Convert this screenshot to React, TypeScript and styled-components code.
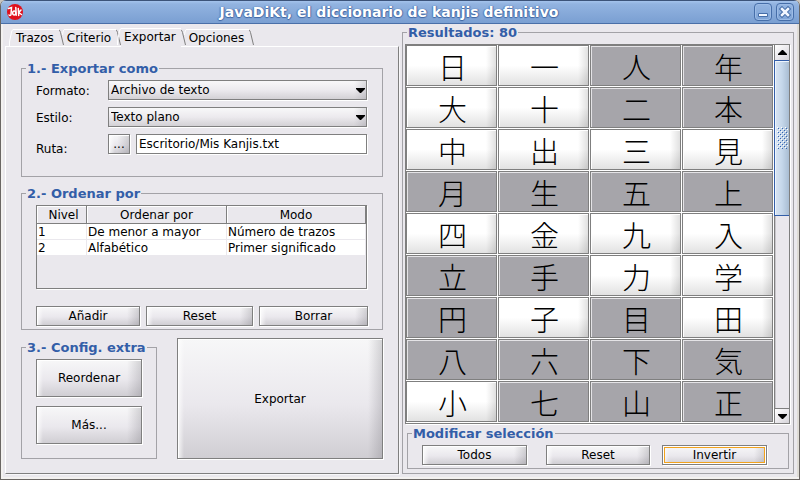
import React, { useState } from 'react';
import styled, { createGlobalStyle, css } from 'styled-components';

const face = '#eae8ed';
const edge = '#7f7f7f';
const etched = '#a3a2a7';
const accent = '#335ea8';

const GlobalStyle = createGlobalStyle`
  * { box-sizing: border-box; }
  body {
    margin: 0;
    background: #c9c5bf;
    font: 12px/14px "DejaVu Sans", sans-serif;
    color: #000;
  }
  button, input, select { font: inherit; color: inherit; margin: 0; outline: none; }
`;

const Frame = styled.div`
  min-height: 100vh;
  display: flex;
  flex-direction: column;
  background: ${face};
  border: 1px solid #6a6663;
  border-top: 0;
  border-radius: 6px 6px 0 0;
  overflow: hidden;
  box-shadow: inset 2px -2px 0 #f3f1f0, inset -2px 0 0 #dfdcd6;
`;

const TitleBar = styled.header`
  height: 24px;
  display: flex;
  align-items: center;
  gap: 4px;
  padding: 0 5px 0 5px;
  border-top: 1px solid #3c5379;
  border-bottom: 1px solid #4a6fa8;
  background: linear-gradient(#a4c3ec 0, #92b3e0 3px, #7a9fd2 100%);
`;

const Title = styled.h1`
  flex: 1;
  margin: 0;
  text-align: center;
  font-size: 14px;
  line-height: 18px;
  font-weight: bold;
  color: #fff;
  text-shadow: 0 1px 1px #3f66a3, 1px 0 1px #4a70ac, -1px 0 1px #5a80ba;
`;

const WindowButton = styled.button`
  width: 18px;
  height: 18px;
  padding: 0;
  display: grid;
  place-items: center;
  border: 1px solid #466ea9;
  border-radius: 4px;
  background: linear-gradient(#93b4e1, #7fa4d6);
  box-shadow: inset 0 0 0 1px #9dbce6;
`;

const Body = styled.main`
  flex: 1;
  display: grid;
  grid-template-columns: 394fr 392fr;
  gap: 3px;
  padding: 1px 5px 5px 4px;
`;

const Left = styled.section`
  display: flex;
  flex-direction: column;
  min-width: 0;
  padding-top: 3px;
`;

const TabStrip = styled.div`
  display: flex;
  padding-left: 4px;
  height: 18px;
`;

const TabButton = styled.button<{ $on: boolean }>`
  display: flex;
  height: ${p => (p.$on ? 19 : 18)}px;
  padding: 0;
  border: 0;
  background: none;
  z-index: ${p => (p.$on ? 1 : 0)};
  & + & { margin-left: -4px; }
  svg { display: block; flex: none; }
`;

const TabText = styled.span<{ $on: boolean }>`
  margin-top: ${p => (p.$on ? 0 : 1)}px;
  height: ${p => (p.$on ? 19 : 17)}px;
  padding: 1px 5px 0 3px;
  border-top: 1px solid #fff;
  background: ${face};
  line-height: 15px;
`;

const TabPanel = styled.div`
  flex: 1;
  display: flex;
  flex-direction: column;
  gap: 9px;
  padding: 14px 15px;
  border: 1px solid;
  border-color: #fff ${edge} ${edge} #fff;
  box-shadow: 1px 1px 0 #f8f7f9;
`;

const Group = styled.fieldset`
  min-width: 0;
  margin: 0;
  padding: 0;
  border: 1px solid ${etched};
`;

const GroupBody = styled.div<{ $pad: string }>`
  padding: ${p => p.$pad};
`;

const Legend = styled.legend`
  margin-left: 4px;
  padding: 0 1px;
  height: 15px;
  font-size: 13px;
  line-height: 15px;
  font-weight: bold;
  color: ${accent};
  white-space: nowrap;
`;

const FormGrid = styled.div`
  display: grid;
  grid-template-columns: 72px 1fr;
  grid-auto-rows: 20px;
  row-gap: 7px;
`;

const Label = styled.label<{ $low?: boolean }>`
  padding-top: ${p => (p.$low ? 8 : 4)}px;
`;

const SelectBox = styled.div`
  display: grid;
  align-items: center;
  > * { grid-area: 1 / 1; }
  svg { justify-self: end; margin-right: 2px; pointer-events: none; }
`;

const Select = styled.select`
  appearance: none;
  width: 100%;
  height: 20px;
  padding: 0 18px 0 2px;
  border: 1px solid ${edge};
  border-radius: 0;
  background: linear-gradient(to left, rgba(80, 78, 90, 0.16), transparent 12px),
    linear-gradient(#f8f8f9, #eceaee 50%, #d3d1d5);
  box-shadow: 1px 1px 0 #fff;
`;

const PathRow = styled.div`
  display: flex;
  gap: 6px;
`;

const TextInput = styled.input`
  flex: 1;
  min-width: 0;
  height: 20px;
  padding: 0 2px;
  border: 1px solid ${edge};
  background: #fff;
  box-shadow: 1px 1px 0 #fff;
`;

const PushButton = styled.button<{ $h?: number; $w?: number; $focus?: boolean; $tall?: boolean }>`
  height: ${p => p.$h ?? 20}px;
  width: ${p => (p.$w ? `${p.$w}px` : 'auto')};
  min-width: 0;
  padding: 0;
  border: 1px solid ${edge};
  background: linear-gradient(to right, rgba(255, 255, 255, 0.8), transparent 6px),
    linear-gradient(to left, rgba(70, 68, 76, 0.2), transparent ${p => (p.$tall ? 14 : 12)}px),
    linear-gradient(#f7f7f8, #eae8ed 55%, #d0ced3);
  box-shadow: 1px 1px 0 #fff, inset 1px 1px 0 #fff;
  ${p =>
    p.$focus &&
    css`
      box-shadow: 1px 1px 0 #fff, inset 0 0 0 1px #fff, inset 0 0 0 2px #f2a21c;
    `}
`;

const TableBox = styled.div`
  height: 84px;
  margin-right: 1px;
  border: 1px solid ${edge};
  box-shadow: 1px 1px 0 #fff;
`;

const Levels = styled.table`
  width: 100%;
  table-layout: fixed;
  border-collapse: separate;
  border-spacing: 0;
  col:nth-child(1) { width: 50px; }
  col:nth-child(2) { width: 140px; }
  th {
    height: 18px;
    padding: 1px 0 0;
    font-weight: normal;
    border-right: 1px solid ${edge};
    border-bottom: 1px solid ${edge};
    box-shadow: inset 1px 1px 0 #fff;
  }
  th:first-child { padding-left: 4px; }
  td {
    height: 16px;
    padding: 0 1px;
    background: #fff;
    border-right: 1px solid ${face};
    border-bottom: 1px solid ${face};
    white-space: nowrap;
  }
`;

const ThreeButtons = styled.div`
  display: grid;
  grid-template-columns: 104fr 107fr 109fr;
  gap: 6px;
  margin-top: 17px;
`;

const ExtraRow = styled.div`
  display: flex;
  align-items: flex-end;
  gap: 20px;
  margin-top: -1px;
`;

const ExtraGroup = styled(Group)`
  width: 136px;
`;

const Stack = styled.div`
  display: flex;
  flex-direction: column;
  gap: 9px;
`;

const Grow = styled.div`
  flex: 1;
  display: grid;
`;

const Results = styled.div`
  display: grid;
  grid-template-columns: 1fr 15px;
  border: 1px solid ${edge};
  box-shadow: 1px 1px 0 #fff;
`;

const KanjiGrid = styled.div`
  display: grid;
  grid-template-columns: repeat(4, 1fr);
  grid-auto-rows: 41px;
  gap: 1px;
  padding: 0 1px 1px 0;
  background: #fff;
`;

const KanjiButton = styled.button<{ $sel: boolean }>`
  min-width: 0;
  padding: 0 0 0 2px;
  border: 1px solid ${edge};
  font: 300 29px/32px "Noto Sans CJK JP", sans-serif;
  background: ${p =>
    p.$sel
      ? '#a6a5aa'
      : `linear-gradient(to left, rgba(0, 0, 0, 0.12), transparent 10px),
         linear-gradient(#fff 50%, #e2e2e2)`};
  box-shadow: inset 1px 1px 0 ${p => (p.$sel ? '#e4e3e6' : '#fff')};
`;

const ScrollBar = styled.div`
  display: flex;
  flex-direction: column;
  background: ${face};
  border-left: 1px solid ${edge};
  box-shadow: inset 1px 0 0 #c8c6cb;
`;

const ScrollButton = styled.button`
  height: 15px;
  padding: 0;
  display: grid;
  place-items: center;
  border: 0;
  background: linear-gradient(135deg, #fff, #eceaee 50%, #d5d3d8);
`;

const DownButton = styled(ScrollButton)`
  border-top: 1px solid ${edge};
`;

const Thumb = styled.div`
  height: 156px;
  margin-left: -1px;
  display: grid;
  place-items: center;
  border: 1px solid ${accent};
  border-right: 0;
  background: linear-gradient(to right, #d9e5f3, #c5d7ea 50%, #a9bdd2);
  box-shadow: inset 1px 1px 0 #eef5fc;
`;

const Track = styled.div`
  flex: 1;
`;

const SelectionGroup = styled(Group)`
  margin: 2px 1px 0 2px;
`;

const SelectionButtons = styled.div`
  display: grid;
  grid-template-columns: 112fr 104fr 105fr;
  gap: 12px;
  > :first-child { margin-right: 7px; }
`;

const DownArrow = () => (
  <svg width="9" height="5" viewBox="0 0 9 5" aria-hidden="true">
    <path d="M0 0h9v1L5 5H4L0 1z" />
  </svg>
);

const UpArrow = () => (
  <svg width="9" height="5" viewBox="0 0 9 5" aria-hidden="true">
    <path d="M4 0h1l4 4v1H0V4z" />
  </svg>
);

const Logo = () => (
  <svg width="18" height="18" viewBox="0 0 18 18" role="img" aria-label="JavaDiKt">
    <circle cx="9" cy="9" r="8" fill="#e0101c" />
    <g fill="none" stroke="#fff" strokeWidth="1.5" strokeLinecap="round">
      <path d="M2.500 5.500L5.500 4.500 5 11.500Q4.500 13 3 12" />
      <ellipse cx="8.200" cy="10" rx="1.500" ry="2" />
      <path d="M9.800 4.500l.4 7.800M12.300 5.500l.4 7M15 7l-2.300 2.500 2.800 2" />
    </g>
  </svg>
);

const Grip = () => (
  <svg width="11" height="22" viewBox="0 0 11 22" aria-hidden="true">
    <defs>
      <pattern id="grip" width="4" height="4" patternUnits="userSpaceOnUse">
        <path d="M0 0h1v1H0zM2 2h1v1H2z" fill="#fff" />
        <path d="M1 1h1v1H1zM3 3h1v1H3z" fill="#3465b4" />
      </pattern>
    </defs>
    <rect width="11" height="22" fill="url(#grip)" />
  </svg>
);

function Tab({ label, on, first, onClick }: { label: string; on: boolean; first: boolean; onClick: () => void }) {
  const leftLine = on || first ? 'M0.5 18V14L2.5 4Q3 1.5 4.5 1.5' : 'M2.5 7L3 4Q3.5 1.5 4.5 1.5';
  const shift = on ? 'translate(0 -1)' : undefined;
  return (
    <TabButton type="button" role="tab" aria-selected={on} $on={on} onClick={onClick}>
      <svg width="4" height="18" viewBox="0 0 4 18" aria-hidden="true">
        <path d={leftLine} transform={shift} fill="none" stroke="#fff" />
      </svg>
      <TabText $on={on}>{label}</TabText>
      <svg width="5" height="18" viewBox="0 0 5 18" aria-hidden="true">
        <path d="M0 2q1 .3 1.500 2.500L4.500 17" fill="none" stroke={edge} />
      </svg>
    </TabButton>
  );
}

const tabs = ['Trazos', 'Criterio', 'Exportar', 'Opciones'];
const kanji = [...'日一人年大十二本中出三見月生五上四金九入立手力学円子目田八六下気小七山正'];
const picked = [...'人年二本月生五上立手円目八六下気七山正'];

export default function App() {
  const [tab, setTab] = useState('Exportar');
  const [selected, setSelected] = useState<string[]>(picked);
  const toggle = (k: string) =>
    setSelected(s => (s.includes(k) ? s.filter(x => x !== k) : [...s, k]));

  return (
    <>
      <GlobalStyle />
      <Frame>
        <TitleBar>
          <Logo />
          <Title>JavaDiKt, el diccionario de kanjis definitivo</Title>
          <WindowButton type="button" aria-label="Minimizar">
            <svg width="12" height="12" viewBox="0 0 12 12" aria-hidden="true">
              <path d="M1.500 7.500h9v3h-9z" fill="#f2f7ff" stroke="#466ea9" />
            </svg>
          </WindowButton>
          <WindowButton type="button" aria-label="Cerrar">
            <svg width="12" height="12" viewBox="0 0 12 12" aria-hidden="true">
              <path d="M3 3l6 6M9 3l-6 6" stroke="#466ea9" strokeWidth="4.500" strokeLinecap="square" />
              <path d="M3 3l6 6M9 3l-6 6" stroke="#f2f7ff" strokeWidth="2.500" strokeLinecap="square" />
            </svg>
          </WindowButton>
        </TitleBar>
        <Body>
          <Left>
            <TabStrip role="tablist">
              {tabs.map((t, i) => (
                <Tab key={t} label={t} first={i === 0} on={t === tab} onClick={() => setTab(t)} />
              ))}
            </TabStrip>
            <TabPanel role="tabpanel">
              <Group>
                <Legend>1.- Exportar como</Legend>
                <GroupBody $pad="4px 15px 22px 14px">
                  <FormGrid>
                    <Label htmlFor="formato">Formato:</Label>
                    <SelectBox>
                      <Select id="formato">
                        <option>Archivo de texto</option>
                      </Select>
                      <DownArrow />
                    </SelectBox>
                    <Label htmlFor="estilo">Estilo:</Label>
                    <SelectBox>
                      <Select id="estilo">
                        <option>Texto plano</option>
                      </Select>
                      <DownArrow />
                    </SelectBox>
                    <Label htmlFor="ruta" $low>Ruta:</Label>
                    <PathRow>
                      <PushButton type="button" $w={22}>...</PushButton>
                      <TextInput id="ruta" defaultValue="Escritorio/Mis Kanjis.txt" />
                    </PathRow>
                  </FormGrid>
                </GroupBody>
              </Group>
              <Group>
                <Legend>2.- Ordenar por</Legend>
                <GroupBody $pad="4px 14px 3px">
                  <TableBox>
                    <Levels>
                      <colgroup><col /><col /><col /></colgroup>
                      <thead>
                        <tr><th>Nivel</th><th>Ordenar por</th><th>Modo</th></tr>
                      </thead>
                      <tbody>
                        <tr><td>1</td><td>De menor a mayor</td><td>Número de trazos</td></tr>
                        <tr><td>2</td><td>Alfabético</td><td>Primer significado</td></tr>
                      </tbody>
                    </Levels>
                  </TableBox>
                  <ThreeButtons>
                    <PushButton type="button">Añadir</PushButton>
                    <PushButton type="button">Reset</PushButton>
                    <PushButton type="button">Borrar</PushButton>
                  </ThreeButtons>
                </GroupBody>
              </Group>
              <ExtraRow>
                <ExtraGroup>
                  <Legend>3.- Config. extra</Legend>
                  <GroupBody $pad="4px 14px 14px">
                    <Stack>
                      <PushButton type="button" $h={38} $tall>Reordenar</PushButton>
                      <PushButton type="button" $h={38} $tall>Más...</PushButton>
                    </Stack>
                  </GroupBody>
                </ExtraGroup>
                <Grow>
                  <PushButton type="button" $h={121} $tall>Exportar</PushButton>
                </Grow>
              </ExtraRow>
            </TabPanel>
          </Left>
          <Group>
            <Legend>Resultados: 80</Legend>
            <GroupBody $pad="4px 3px 4px 2px">
              <Results>
                <KanjiGrid>
                  {kanji.map(k => (
                    <KanjiButton
                      key={k}
                      type="button"
                      lang="ja"
                      aria-pressed={selected.includes(k)}
                      $sel={selected.includes(k)}
                      onClick={() => toggle(k)}
                    >
                      {k}
                    </KanjiButton>
                  ))}
                </KanjiGrid>
                <ScrollBar>
                  <ScrollButton type="button" aria-label="Subir"><UpArrow /></ScrollButton>
                  <Thumb><Grip /></Thumb>
                  <Track />
                  <DownButton type="button" aria-label="Bajar"><DownArrow /></DownButton>
                </ScrollBar>
              </Results>
              <SelectionGroup>
                <Legend>Modificar selección</Legend>
                <GroupBody $pad="4px 21px 3px 14px">
                  <SelectionButtons>
                    <PushButton type="button" onClick={() => setSelected(kanji)}>Todos</PushButton>
                    <PushButton type="button" onClick={() => setSelected([])}>Reset</PushButton>
                    <PushButton
                      type="button"
                      $focus
                      onClick={() => setSelected(kanji.filter(k => !selected.includes(k)))}
                    >
                      Invertir
                    </PushButton>
                  </SelectionButtons>
                </GroupBody>
              </SelectionGroup>
            </GroupBody>
          </Group>
        </Body>
      </Frame>
    </>
  );
}
